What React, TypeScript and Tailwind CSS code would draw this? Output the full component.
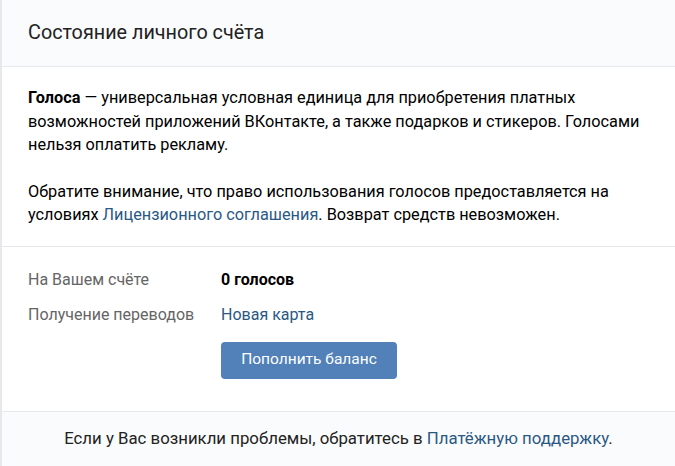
export default function App() {
  return (
    <div className="flex h-[466px] w-[675px] flex-col overflow-hidden border-l-2 border-[#e7e8ec] bg-white font-['Roboto',sans-serif] text-black">
      <div className="flex h-[67px] shrink-0 items-center border-b border-[#e7e8ec] bg-[#fafbfc] px-[26px]">
        <h1 className="text-[19.8px] text-[#222]">Состояние личного счёта</h1>
      </div>

      <div className="border-b border-[#e7e8ec] px-[26px] pb-[19px] pt-[19px] text-[16.3px] leading-[23.5px]">
        <p>
          <b>Голоса</b> — универсальная условная единица для приобретения платных возможностей
          приложений ВКонтакте, а также подарков и стикеров. Голосами нельзя оплатить рекламу.
        </p>
        <p className="mt-[23px]">
          Обратите внимание, что право использования голосов предоставляется на условиях{' '}
          <a className="text-[#2a5885]">Лицензионного соглашения</a>. Возврат средств невозможен.
        </p>
      </div>

      <div className="flex-1 px-[26px] pt-[21px] text-[16px]">
        <div className="flex h-[24px] items-center">
          <span className="w-[193px] text-[#656565]">На Вашем счёте</span>
          <span className="font-bold">0 голосов</span>
        </div>
        <div className="mt-[11px] flex h-[24px] items-center">
          <span className="w-[193px] text-[#656565]">Получение переводов</span>
          <a className="text-[#2a5885]">Новая карта</a>
        </div>
        <div className="mt-[15px] pl-[193px]">
          <button className="h-[37px] w-[176px] rounded-[4px] bg-[#5181b8] text-[15.5px] text-white">
            Пополнить баланс
          </button>
        </div>
      </div>

      <div className="flex h-[55px] shrink-0 items-center justify-center border-t border-[#e7e8ec] bg-[#fafbfc] text-[16.8px] text-[#222]">
        <span>
          Если у Вас возникли проблемы, обратитесь в <a className="text-[#2a5885]">Платёжную поддержку</a>.
        </span>
      </div>
    </div>
  )
}
